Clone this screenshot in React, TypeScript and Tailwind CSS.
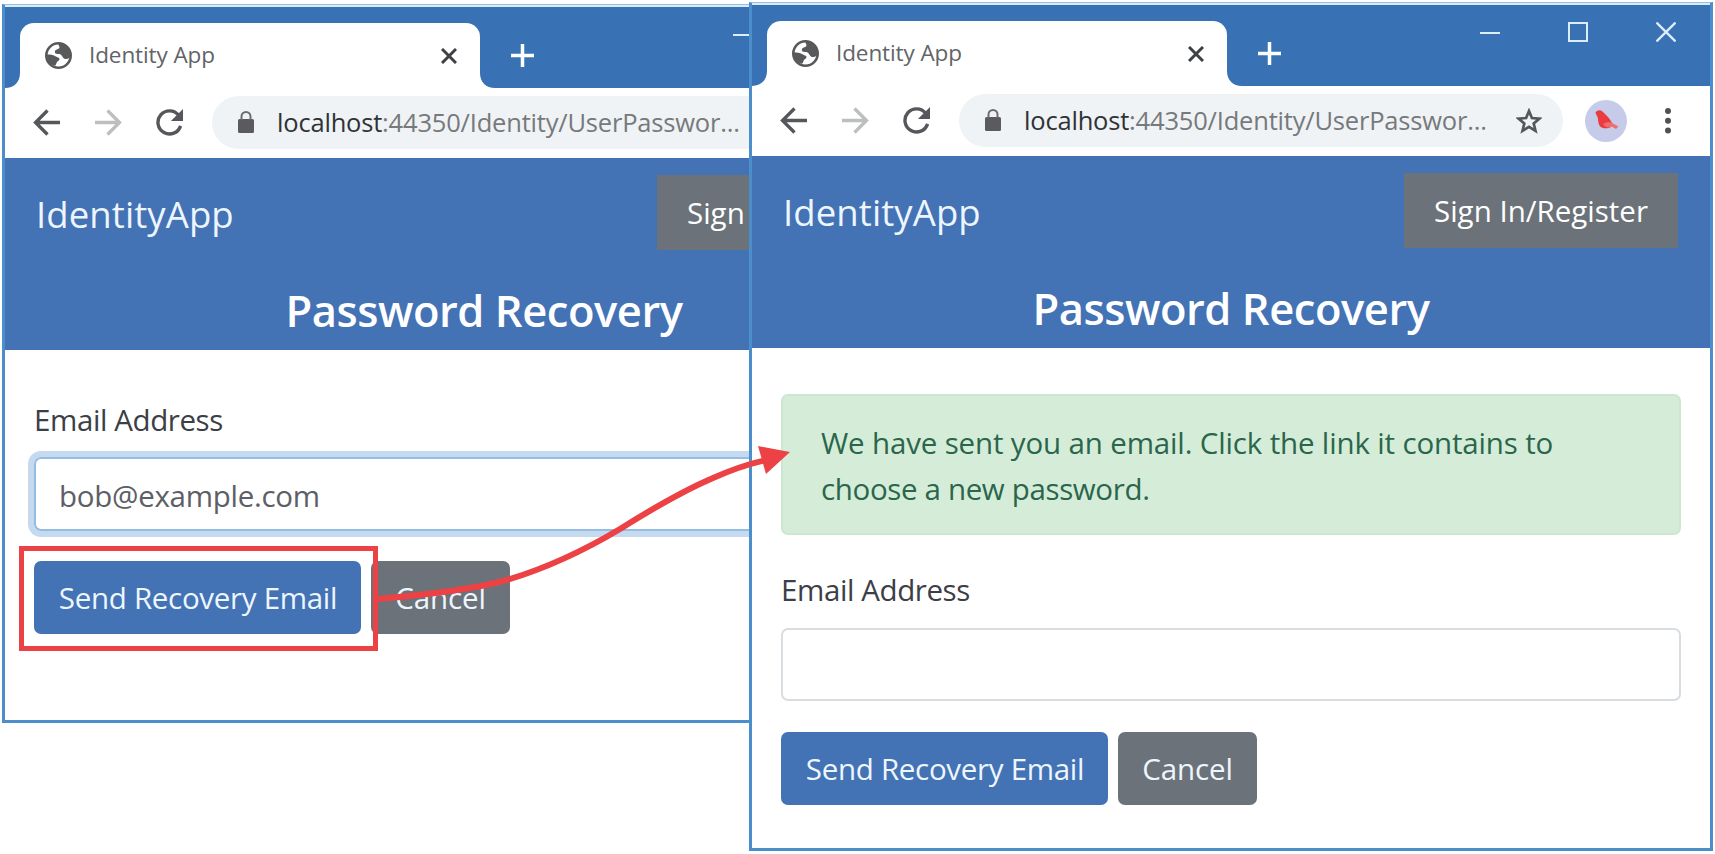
import type { ReactNode } from "react";

function GlobeIcon() {
  return (
    <svg className="size-[27px] shrink-0" viewBox="0 0 27 27">
      <circle cx="13.5" cy="13.5" r="12.2" fill="#fff" stroke="#58595b" strokeWidth="2.6" />
      <path
        fill="#58595b"
        d="M13.500 1.500c-.5 1.500 1 2.500 1 4-.5 2-3.500 1.500-4.500 3.500-.8 2 .5 3 3 3 2.500 0 3 .5 4 2s1.500 3 3.500 3c2 0 3.500-.5 4.700-2C26.500 7 20.500 1.500 13.500 1.500Z"
      />
      <path
        fill="#58595b"
        d="M2 12.500c3 0 6 .3 8 1.500 2 1.500 4.500 1.200 4.500 3.200 0 1.800-2.500 1.800-3 3.800-.3 1.300-.5 2-1.500 2.700C5 23 1.500 18 2 12.500Z"
      />
    </svg>
  );
}

function TitleBar() {
  return (
    <div className="flex h-[81px] shrink-0 bg-[#3872b5] pl-[15px]">
      <div className="relative mt-4 flex h-[65px] w-[460px] items-center rounded-t-[14px] bg-white pl-[25px]">
        <svg className="absolute bottom-0 -left-[15px] h-[15px] w-[15px]" viewBox="0 0 15 15">
          <path d="M15 0v15H0C9 15 15 9 15 0Z" fill="#fff" />
        </svg>
        <svg className="absolute -right-[15px] bottom-0 h-[15px] w-[15px]" viewBox="0 0 15 15">
          <path d="M0 0v15h15C6 15 0 9 0 0Z" fill="#fff" />
        </svg>
        <GlobeIcon />
        <span className="ml-[17px] text-[22.500px] leading-none tracking-[-0.1px] text-[#626467]">Identity App</span>
        <svg className="mr-[23px] ml-auto size-4" viewBox="0 0 16 16" stroke="#3f4144" strokeWidth="3">
          <path d="M1 1l14 14M15 1L1 15" />
        </svg>
      </div>
      <svg className="mt-[37px] ml-[31px] size-[23px]" viewBox="0 0 23 23" stroke="#fff" strokeWidth="3.500">
        <path d="M11.500 0v23M0 11.500h23" />
      </svg>
      <div className="mt-[17px] mr-[34px] ml-auto flex h-5 gap-[68px]">
        <svg className="size-5" viewBox="0 0 20 20" fill="none" stroke="#dceefb" strokeWidth="2">
          <path d="M0 11h20" />
        </svg>
        <svg className="size-5" viewBox="0 0 20 20" fill="none" stroke="#dceefb" strokeWidth="2">
          <path d="M1 1h18v18H1z" />
        </svg>
        <svg className="size-5" viewBox="0 0 20 20" fill="none" stroke="#dceefb" strokeWidth="2.300">
          <path d="M.5.5l19 19M19.500.5l-19 19" />
        </svg>
      </div>
    </div>
  );
}

function Toolbar() {
  return (
    <div className="flex h-[70px] shrink-0 items-center bg-white pb-px pl-[28px]">
      <svg className="size-[27px] shrink-0" viewBox="0 0 27 27" fill="none" stroke="#55575a" strokeWidth="3.300">
        <path d="M27 13.500H2.500M14.500 1.500l-12 12 12 12" />
      </svg>
      <svg className="ml-[35px] size-[27px] shrink-0" viewBox="0 0 27 27" fill="none" stroke="#bcbec0" strokeWidth="3.300">
        <path d="M0 13.500h24.500M12.500 1.500l12 12-12 12" />
      </svg>
      <svg className="ml-[34px] size-[27px] shrink-0" viewBox="0 0 28 28" fill="none">
        <path d="M23.500 6.500A12 12 0 1 0 25.500 17.500" stroke="#55575a" strokeWidth="3.500" />
        <path d="M28 0v12.500H15.500Z" fill="#55575a" />
      </svg>
      <div className="ml-[29px] flex h-[53px] w-[604px] items-center rounded-full bg-[#eff3f5] pr-[21px] pl-[26px]">
        <svg className="mb-[2px] h-[22px] w-4 shrink-0" viewBox="0 0 16 22">
          <rect x="0" y="8" width="16" height="14" rx="1.500" fill="#5b5b5d" />
          <path d="M3.500 9V5.500a4.500 4.500 0 0 1 9 0V9" fill="none" stroke="#6d6d6f" strokeWidth="2" />
        </svg>
        <span className="ml-[23px] text-[25.500px] leading-none tracking-[-0.19px] whitespace-nowrap text-[#77797c]">
          <span className="text-[#303235]">localhost</span>:44350/Identity/UserPasswor...
        </span>
        <svg className="ml-auto size-[26px] shrink-0" viewBox="0 0 26 26" fill="none" stroke="#55575a" strokeWidth="2.700">
          <path d="M13 3l2.900 7 7.600.6-5.800 4.900 1.800 7.300L13 18.900l-6.500 3.900 1.800-7.300-5.800-4.900 7.600-.6Z" />
        </svg>
      </div>
      <svg className="ml-[22px] size-[42px] shrink-0" viewBox="0 0 42 42">
        <circle cx="21" cy="21" r="21" fill="#c5cbe8" />
        <path
          fill="#ea3b3e"
          d="M10.500 13c.8-2.800 4.500-3.800 7-1.500 2 1.800 3.500 3.500 5.500 5.500 2 2.200 3 4.500 4.500 6.500l-1.500 3.500c-3 1.800-8 1.800-10.200 0-3-2.500-2.300-6.800-3.300-10Z"
        />
        <path fill="#f06d6e" d="M18 24c2.500-1.500 5-2 8-1.500l7.500 4-2.500 2.500-4.500-2.500c-3 1.500-6 1.200-8.500-2.500Z" />
      </svg>
      <svg className="ml-[38px] h-[27px] w-[6px] shrink-0" viewBox="0 0 6 27" fill="#4f5154">
        <circle cx="3" cy="4" r="3" />
        <circle cx="3" cy="13.800" r="3" />
        <circle cx="3" cy="23.600" r="3" />
      </svg>
    </div>
  );
}

function Header() {
  return (
    <div className="flex h-48 shrink-0 flex-col bg-[#4372b5] text-white">
      <div className="flex items-start justify-between pt-[17px] pr-[32px] pl-[31px]">
        <span className="mt-[14px] text-[36.500px] leading-[50px] tracking-[0.1px] text-[#eef6fd]">IdentityApp</span>
        <button className="h-[75px] w-[274px] bg-[#6c7279] pt-[2px] text-[29.500px] tracking-[0px] whitespace-nowrap">
          Sign In/Register
        </button>
      </div>
      <h4 className="mt-[35px] h-[52px] text-center text-[43.500px] leading-[52px] font-semibold tracking-[-0.45px]">
        Password Recovery
      </h4>
    </div>
  );
}

function Buttons() {
  return (
    <div className="flex gap-[10px] text-[29.500px] tracking-[-0.3px] text-[#eef6fd]">
      <button className="h-[73px] w-[327px] rounded-[7px] bg-[#4372b5] pt-px pl-px whitespace-nowrap">
        Send Recovery Email
      </button>
      <button className="h-[73px] w-[139px] rounded-[7px] bg-[#6c7279] pt-px tracking-[-0.1px]">Cancel</button>
    </div>
  );
}

function BrowserWindow({ className, children }: { className: string; children: ReactNode }) {
  return (
    <section
      className={
        "absolute flex w-[964px] flex-col overflow-hidden border-x-[3px] border-t border-b-[3px] border-[#4b8ecb] border-t-[#8fc3e6] bg-white " +
        className
      }
    >
      <div className="h-[2px] shrink-0 bg-[#dcebf6]" />
      <TitleBar />
      <Toolbar />
      <Header />
      <div className="flex flex-col px-[29px]">{children}</div>
    </section>
  );
}

export default function App() {
  return (
    <main className="relative h-[854px] w-[1715px] overflow-hidden bg-white font-['Open_Sans',sans-serif]">
      <BrowserWindow className="top-[4px] left-[2px] h-[719px]">
        <label className="mt-[50px] text-[29.500px] leading-[40px] tracking-[-0.4px] text-[#3c4046]">Email Address</label>
        <div className="mt-[17px] flex h-[74px] items-center rounded-[7px] border-2 border-[#93bde2] pt-[4px] pl-[23px] text-[29.500px] leading-[40px] tracking-[-0.28px] text-[#5c6066] ring-[6px] ring-[#c5daee]">
          bob@example.com
        </div>
        <div className="mt-[30px]">
          <Buttons />
        </div>
      </BrowserWindow>

      <BrowserWindow className="top-[2px] left-[749px] h-[849px]">
        <div className="mt-[46px] h-[141px] rounded-[7px] border-2 border-[#cbe7ce] bg-[#d5edd8] pt-[24px] pl-[38px] text-[29.500px] leading-[46px] tracking-[-0.15px] whitespace-nowrap text-[#2b664c]">
          We have sent you an email. Click the link it contains to
          <br />
          <span className="tracking-[-0.35px]">choose a new password.</span>
        </div>
        <label className="mt-[35px] text-[29.500px] leading-[40px] tracking-[-0.4px] text-[#3c4046]">Email Address</label>
        <div className="mt-[18px] h-[73px] rounded-[7px] border-2 border-[#d8dde1]" />
        <div className="mt-[31px]">
          <Buttons />
        </div>
      </BrowserWindow>

      <div className="absolute top-[546px] left-[19px] h-[105px] w-[359px] border-[5px] border-[#ec4245]" />
      <svg className="absolute inset-0" width="1715" height="854" viewBox="0 0 1715 854" fill="none">
        <path
          d="M377 599C425 595 470 590 507 580C550 567 585 550 620 529C655 507 685 490 713 478C733 469 748 464 766 460"
          stroke="#ec4245"
          strokeWidth="6"
        />
        <path d="M790 452L758 446L766 474Z" fill="#ec4245" />
      </svg>
    </main>
  );
}
